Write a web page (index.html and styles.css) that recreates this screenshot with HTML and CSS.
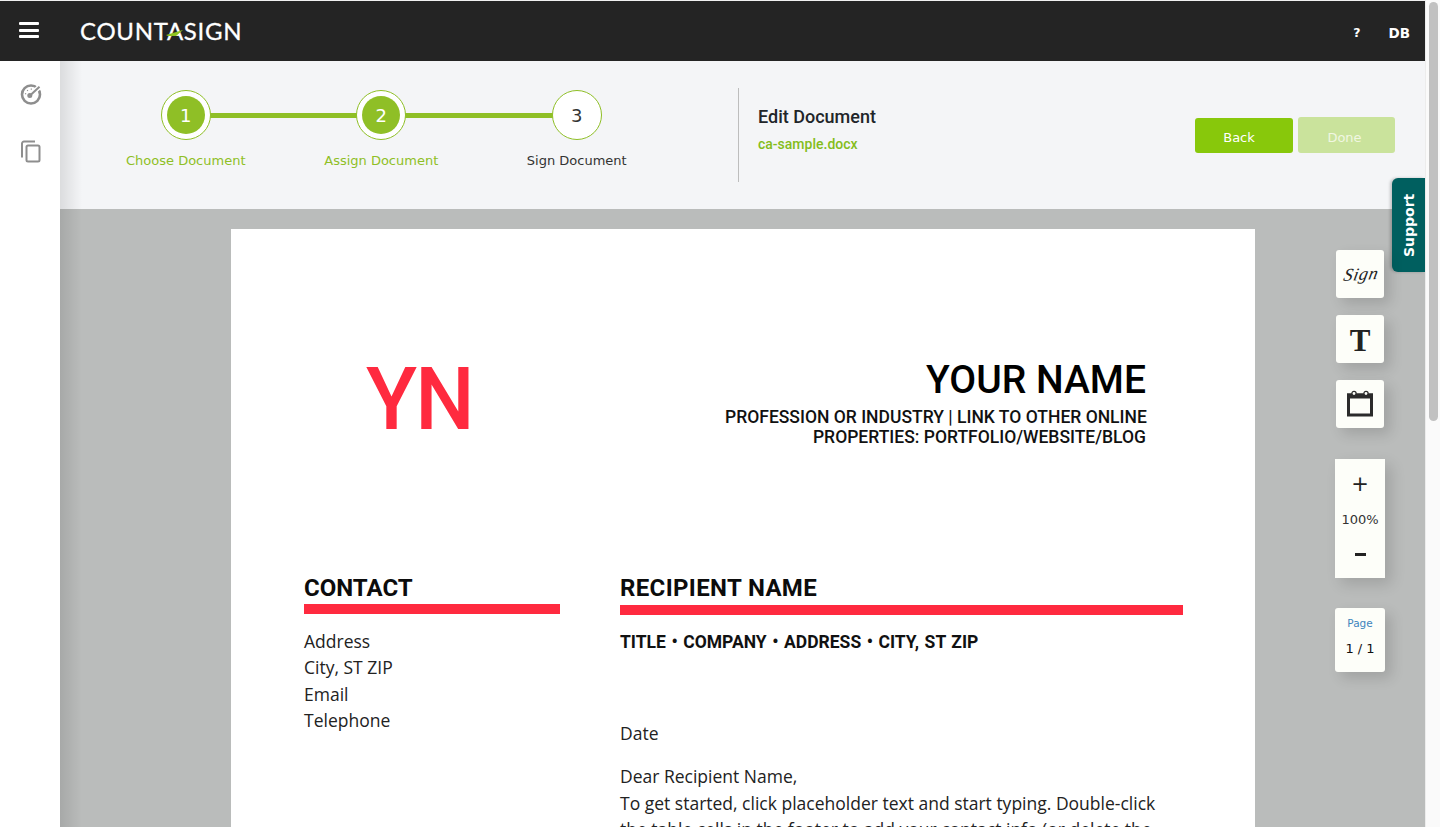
FILE: index.html
```html
<!DOCTYPE html>
<html lang="en">
<head>
<meta charset="utf-8">
<title>Countasign - Edit Document</title>
<link rel="stylesheet" href="styles.css">
</head>
<body>
<div class="app">
  <header class="topbar">
    <button class="menu" aria-label="Menu"><span></span><span></span><span></span></button>
    <div class="logo">COUNT<span class="logo-a">A<svg class="logo-swoosh" viewBox="0 0 18 8" width="18" height="8"><path d="M0 5 L17 0 L10 6 L2 6 Z" fill="#8fc31f"/></svg></span>SIGN</div>
    <div class="top-actions"><span class="help">?</span><span class="user">DB</span></div>
  </header>
  <div class="body">
    <nav class="sidebar">
      <svg class="side-icon" viewBox="0 0 24 24" width="24" height="24" fill="none"><circle cx="12" cy="12.500" r="9" stroke="#8e8e8e" stroke-width="2.600"/><path d="M11 13.500 L23 2.500" stroke="#fff" stroke-width="5"/><path d="M11 13.500 L20.500 4.800" stroke="#8e8e8e" stroke-width="2"/><circle cx="10.800" cy="13.600" r="2.500" fill="#8e8e8e"/><path d="M6 11.500l1.200 .4M8.200 8l.7 1M12.300 6.500v1.300" stroke="#8e8e8e" stroke-width="1.100"/></svg>
      <svg class="side-icon" viewBox="0 0 24 24" width="24" height="24" fill="none" stroke="#8e8e8e" stroke-width="2"><path d="M16 2.500H5a2 2 0 0 0-2 2v14"/><rect x="7.500" y="6.500" width="13" height="16" rx="1.500"/></svg>
    </nav>
    <main class="main">
      <section class="subheader">
        <ol class="stepper">
          <li class="step done"><span class="circle"><span class="dot">1</span></span><span class="step-label">Choose Document</span></li>
          <li class="step done"><span class="circle"><span class="dot">2</span></span><span class="step-label">Assign Document</span></li>
          <li class="step"><span class="circle"><span class="dot">3</span></span><span class="step-label">Sign Document</span></li>
        </ol>
        <div class="doc-info">
          <div class="doc-title">Edit Document</div>
          <div class="doc-name">ca-sample.docx</div>
        </div>
        <div class="actions">
          <button class="btn">Back</button>
          <button class="btn disabled">Done</button>
        </div>
      </section>
      <section class="viewer">
        <article class="page">
          <div class="page-head">
            <div class="monogram">YN</div>
            <div class="identity">
              <h1 class="name">YOUR NAME</h1>
              <p class="profession">PROFESSION OR INDUSTRY | LINK TO OTHER ONLINE<br>PROPERTIES: PORTFOLIO/WEBSITE/BLOG</p>
            </div>
          </div>
          <div class="page-cols">
            <div class="col-left">
              <h2 class="heading">CONTACT</h2>
              <div class="rule"></div>
              <p class="text">Address<br>City, ST ZIP<br>Email<br>Telephone</p>
            </div>
            <div class="col-right">
              <h2 class="heading heading-right">RECIPIENT NAME</h2>
              <div class="rule rule-right"></div>
              <p class="subline">TITLE • COMPANY • ADDRESS • CITY, ST ZIP</p>
              <p class="text date">Date</p>
              <p class="text letter">Dear Recipient Name,<br>To get started, click placeholder text and start typing. Double-click<br>the table cells in the footer to add your contact info (or delete the</p>
            </div>
          </div>
        </article>
      </section>
      <aside class="support">Support</aside>
      <div class="tools">
        <button class="tool"><span class="sign-text">Sign</span></button>
        <button class="tool tool-t">T</button>
        <button class="tool" aria-label="Date"><svg viewBox="0 0 28 28" width="28" height="28"><rect x="2.500" y="5" width="23" height="20" fill="none" stroke="#2b2b2b" stroke-width="3"/><rect x="1" y="3.500" width="26" height="5" fill="#2b2b2b"/><circle cx="8" cy="3.500" r="2.100" fill="#fdfef9" stroke="#2b2b2b" stroke-width="1.300"/><circle cx="20" cy="3.500" r="2.100" fill="#fdfef9" stroke="#2b2b2b" stroke-width="1.300"/></svg></button>
        <div class="zoom-box"><span class="zoom-btn">+</span><span class="zoom-val">100%</span><span class="zoom-minus"></span></div>
        <div class="page-box"><span class="page-label">Page</span><span class="page-val">1 / 1</span></div>
      </div>
    </main>
  </div>
</div>
<div class="scrollbar"><div class="thumb"></div></div>
</body>
</html>
```
FILE: styles.css
```css
* { box-sizing: border-box; }
html, body { margin: 0; height: 100%; overflow: hidden; }
body { display: flex; background: #fff; font-family: "DejaVu Sans", Verdana, sans-serif; color: #333; }
button { font: inherit; border: 0; padding: 0; cursor: pointer; }
p, h1, h2, ol { margin: 0; padding: 0; }

.app { width: 1425px; height: 827px; display: flex; flex-direction: column; padding-top: 1px; overflow: hidden; background: #f0f0f0; }
.scrollbar { width: 15px; height: 827px; background: #fafafa; border-left: 1px solid #ececec; padding: 2px 2px 0 3px; }
.thumb { height: 419px; background: #c1c1c1; border-radius: 5px; }

.topbar { height: 60px; flex: none; background: #242424; display: flex; align-items: center; padding: 0 15px 0 19px; color: #fff; }
.menu { width: 20px; height: 16px; background: none; display: flex; flex-direction: column; justify-content: space-between; margin-top: -2px; }
.menu span { display: block; height: 3px; background: #fff; border-radius: 1px; }
.logo { margin-left: 41px; font-family: Lato, sans-serif; font-weight: 400; font-size: 24px; letter-spacing: .7px; color: #fff; line-height: 30px; white-space: nowrap; -webkit-text-stroke: .3px #fff; }
.logo-a { position: relative; }
.logo-swoosh { position: absolute; left: -1px; top: 14px; }
.top-actions { margin-left: auto; display: flex; gap: 28px; font-weight: 700; font-size: 13.500px; align-items: center; margin-top: 3px; }
.help { font-size: 12.500px; margin-top: -1px; }

.body { flex: 1; display: flex; min-height: 0; }
.sidebar { width: 60px; flex: none; background: #fff; display: flex; flex-direction: column; align-items: center; padding: 21px 0 0 1px; gap: 33px; }
.main { flex: 1; position: relative; display: flex; flex-direction: column; min-width: 0; }
.main::before { content: ""; position: absolute; inset: 0 auto 0 0; width: 22px; background: linear-gradient(to right, rgba(0,0,0,.10), rgba(0,0,0,0)); z-index: 2; pointer-events: none; }

.subheader { height: 148px; flex: none; background: #f4f5f7; display: flex; align-items: flex-start; padding-left: 28px; }
.stepper { list-style: none; display: flex; width: 588px; padding-top: 29px; flex: none; }
.step { width: 195.500px; flex: none; position: relative; display: flex; flex-direction: column; align-items: center; }
.step.done::after { content: ""; position: absolute; left: 98px; top: 23px; width: 195.500px; height: 5px; background: #8fbf26; }
.circle { position: relative; z-index: 1; width: 50px; height: 50px; border-radius: 50%; background: #fff; border: 1px solid #8fbf26; display: flex; align-items: center; justify-content: center; }
.dot { width: 38px; height: 38px; border-radius: 50%; display: flex; align-items: center; justify-content: center; font-size: 18px; color: #333; }
.done .dot { background: #8fbf26; color: #fff; }
.step-label { margin-top: 13px; font-size: 13px; line-height: 16px; color: #333; white-space: nowrap; }
.done .step-label { color: #8fbf26; }

.doc-info { margin: 27px 0 0 62px; width: 457px; height: 94px; border-left: 1px solid #bdbdbd; padding: 17px 0 0 19px; font-family: Roboto, sans-serif; }
.doc-title { font-size: 18px; font-weight: 500; color: #212529; line-height: 24px; }
.doc-name { margin-top: 6px; font-size: 14px; font-weight: 500; color: #84bd1b; line-height: 18px; }
.actions { display: flex; gap: 5px; margin-top: 56px; align-items: flex-end; }
.btn { width: 98px; height: 35px; background: #88c80b; color: #fff; border-radius: 3px; font-size: 13px; padding: 3px 10px 0 0; }
.btn.disabled { width: 97px; height: 36px; background: #cae39c; color: #f1f7e2; padding: 4px 4px 0 0; }

.viewer { flex: 1; min-height: 0; overflow: hidden; background: #babcbb; padding-top: 20px; }
.page { width: 1024px; height: 900px; margin-left: 171px; background: #fff; padding: 126px 72px 0 73px; color: #111; }

.page-head { display: flex; height: 219px; }
.monogram { width: 421px; padding-left: 62px; font-family: Roboto, sans-serif; font-weight: 500; font-size: 88px; line-height: 88px; color: #ff2a3f; letter-spacing: -2px; transform: scaleX(.95); transform-origin: 62px 0; }
.identity { width: 421px; text-align: right; font-family: Roboto, sans-serif; padding-top: 2px; }
.name { font-size: 39px; line-height: 46px; font-weight: 500; color: #000; }
.profession { font-size: 17.500px; line-height: 20px; margin-top: 4px; font-weight: 500; color: #111; white-space: nowrap; }

.page-cols { display: flex; gap: 60px; }
.col-left { width: 256px; }
.col-right { width: 563px; }
.heading { font-family: Roboto, sans-serif; font-size: 24px; line-height: 28px; font-weight: 700; color: #0c0c0c; }
.heading-right { letter-spacing: .35px; }
.rule { height: 10px; background: #ff2a3f; margin-top: 2px; }
.rule-right { transform: translateY(1px); }
.text { font-family: "Open Sans", sans-serif; font-size: 17.500px; line-height: 26.400px; color: #222; margin-top: 14px; }
.subline { font-family: Roboto, sans-serif; font-size: 17.500px; font-weight: 700; line-height: 24px; margin-top: 16px; color: #111; word-spacing: 1.200px; }
.date { margin-top: 66px; }
.letter { margin-top: 17px; }

.support { position: absolute; right: 0; top: 117px; width: 33px; height: 94px; background: #005f5f; color: #fff; font-weight: 700; font-size: 14px; writing-mode: vertical-rl; transform: rotate(180deg); display: flex; align-items: center; justify-content: center; z-index: 3; border-radius: 0 6px 6px 0; box-shadow: 2px 0 3px rgba(0,0,0,.2); }
.tools { position: absolute; right: 40px; top: 189px; width: 50px; display: flex; flex-direction: column; align-items: center; z-index: 3; }
.tool { width: 48px; height: 48px; background: #fdfef9; border-radius: 3px; box-shadow: 6px 6px 14px rgba(0,0,0,.14); display: flex; align-items: center; justify-content: center; margin-bottom: 17px; color: #222; }
.sign-text { display: block; margin-left: 3px; font-family: "Liberation Serif", serif; font-style: italic; font-size: 18px; letter-spacing: .6px; transform: skewX(-14deg) rotate(-3deg); }
.tool-t { font-family: "Liberation Serif", serif; font-weight: 700; font-size: 31px; padding-top: 4px; }
.zoom-box { width: 50px; height: 119px; background: #fdfef9; margin-top: 14px; box-shadow: 6px 6px 14px rgba(0,0,0,.14); display: flex; flex-direction: column; align-items: center; }
.zoom-btn { font-size: 21px; line-height: 26px; margin-top: 12px; color: #222; }
.zoom-val { font-size: 13px; line-height: 16px; margin-top: 15px; color: #333; }
.zoom-minus { width: 11px; height: 3px; background: #222; margin-top: 25px; }
.page-box { width: 50px; height: 64px; margin-top: 30px; background: #fdfef9; border-radius: 3px; box-shadow: 6px 6px 14px rgba(0,0,0,.14); display: flex; flex-direction: column; align-items: center; }
.page-label { font-size: 10.500px; line-height: 14px; color: #3d85bd; margin-top: 8px; }
.page-val { font-size: 13px; line-height: 16px; margin-top: 11px; color: #111; }
```
